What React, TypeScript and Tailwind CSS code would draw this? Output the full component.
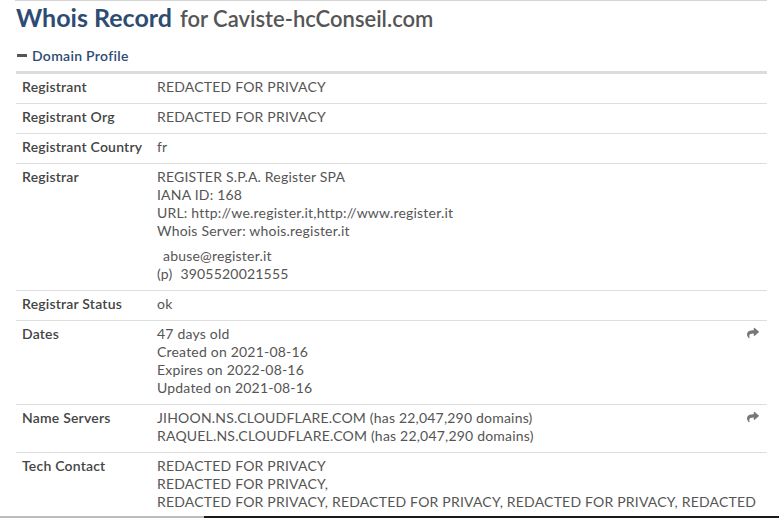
import React from 'react'
import { FaShare } from 'react-icons/fa'

type Row = { label: string; lines: React.ReactNode[]; share?: boolean; extra?: React.ReactNode }

const rows: Row[] = [
    { label: 'Registrant', lines: ['REDACTED FOR PRIVACY'] },
    { label: 'Registrant Org', lines: ['REDACTED FOR PRIVACY'] },
    { label: 'Registrant Country', lines: ['fr'] },
    {
        label: 'Registrar',
        lines: [
            'REGISTER S.P.A. Register SPA',
            'IANA ID: 168',
            'URL: http://we.register.it,http://www.register.it',
            'Whois Server: whois.register.it',
        ],
        extra: (
            <div className="mt-[7px]">
                <div className="pl-[6px]">abuse@register.it</div>
                <div className="flex gap-[8px]">
                    <span>(p)</span>
                    <span>3905520021555</span>
                </div>
            </div>
        ),
    },
    { label: 'Registrar Status', lines: ['ok'] },
    {
        label: 'Dates',
        share: true,
        lines: ['47 days old', 'Created on 2021-08-16', 'Expires on 2022-08-16', 'Updated on 2021-08-16'],
    },
    {
        label: 'Name Servers',
        share: true,
        lines: [
            'JIHOON.NS.CLOUDFLARE.COM (has 22,047,290 domains)',
            'RAQUEL.NS.CLOUDFLARE.COM (has 22,047,290 domains)',
        ],
    },
    {
        label: 'Tech Contact',
        lines: [
            'REDACTED FOR PRIVACY',
            'REDACTED FOR PRIVACY,',
            'REDACTED FOR PRIVACY, REDACTED FOR PRIVACY, REDACTED FOR PRIVACY, REDACTED',
        ],
    },
]

export default function App() {
    return (
        <div
            className="w-[779px] h-[518px] overflow-hidden bg-white flex flex-col"
            style={{ fontFamily: 'Lato, "Open Sans", sans-serif' }}
        >
            <div className="flex-1 overflow-hidden pl-[16px] pr-[12px]">
                {/* Title */}
                <div className="border-t border-[#d4d4d4] -ml-[1px] pl-[1px] h-[39px] flex items-baseline whitespace-nowrap">
                    <span className="text-[25px] font-bold text-[#2d4b73] leading-[32px]">Whois Record</span>
                    <span className="ml-[8px] text-[22px] font-semibold text-[#555]">for Caviste-hcConseil.com</span>
                </div>

                {/* Section header */}
                <div className="h-[35px] flex items-center gap-[5px] text-[14px] tracking-[0.3px] text-[#2d4b73] font-semibold border-b-[3px] border-[#dcdcdc]">
                    <span className="block w-[10px] h-[3px] bg-[#555] ml-[1px]"></span>
                    <span>Domain Profile</span>
                </div>

                {/* Rows */}
                {rows.map(row => (
                    <div
                        key={row.label}
                        className="flex border-b border-[#dddddd] pt-[4px] pb-[7px] text-[14px] tracking-[0.2px] leading-[18px]"
                    >
                        <div className="w-[141px] shrink-0 pl-[6px] font-semibold text-[#444]">{row.label}</div>
                        <div className="flex-1 text-[#555] whitespace-nowrap">
                            {row.lines.map((l, i) => (
                                <div key={i}>{l}</div>
                            ))}
                            {row.extra}
                        </div>
                        {row.share && (
                            <div className="w-[20px] pt-[2px] text-[#777]">
                                <FaShare size={12} />
                            </div>
                        )}
                    </div>
                ))}
            </div>
            <div className="h-[2px] flex">
                <div className="w-[204px] bg-[#bdbdbd]"></div>
                <div className="flex-1 bg-[#1a1a1a]"></div>
            </div>
        </div>
    )
}
